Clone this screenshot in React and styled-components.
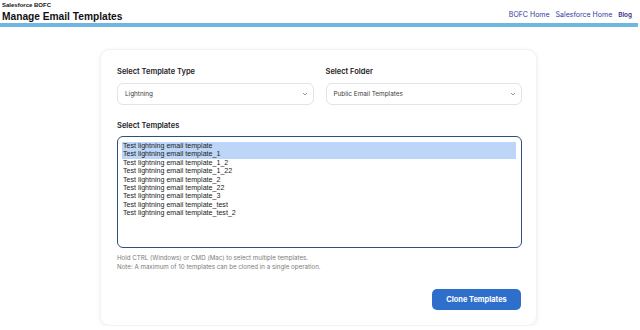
import React from "react";
import styled, { createGlobalStyle } from "styled-components";

const Global = createGlobalStyle`
  html, body { margin: 0; padding: 0; background: #ffffff; }
  body { font-family: "Inter", "Liberation Sans", sans-serif; color: #1f1f1f; }
  * { box-sizing: border-box; }
`;

const Header = styled.header`
  display: flex;
  justify-content: space-between;
  align-items: flex-end;
  padding: 1px 8px 0 2px;
  height: 23px;
`;

const Brand = styled.div`
  display: flex;
  flex-direction: column;
  font-family: "Liberation Sans", Arial, sans-serif;
`;

const SiteName = styled.div`
  font-size: 6px;
  font-weight: 700;
  line-height: 7px;
  color: #111;
`;

const Title = styled.h1`
  margin: 1px 0 0;
  font-size: 10.2px;
  font-weight: 700;
  line-height: 13px;
  color: #111;
`;

const Nav = styled.nav`
  display: flex;
  gap: 6px;
  align-items: baseline;
  padding-bottom: 4px;
`;

const NavLink = styled.a`
  font-family: "Inter", sans-serif;
  font-size: ${(p) => (p.$small ? "6.4px" : "7px")};
  font-weight: ${(p) => (p.$small ? 600 : 400)};
  color: ${(p) => (p.$small ? "#3d2f8a" : "#2f3ba0")};
  text-decoration: none;
`;

const Bar = styled.div`
  height: 4px;
  margin-right: 2px;
  background: #6fb7e1;
`;

const Main = styled.main`
  display: flex;
  justify-content: center;
  padding: 22px 3px 0 0;
`;

const Card = styled.section`
  width: 437px;
  background: #fff;
  border-radius: 10px;
  border: 1px solid #f1f2f4;
  box-shadow: 0 1px 5px rgba(0, 0, 0, 0.07);
  padding: 17px 14px 15px 16px;
  display: flex;
  flex-direction: column;
`;

const Row = styled.div`
  display: grid;
  grid-template-columns: 1fr 1fr;
  gap: 12px;
`;

const Field = styled.div`
  display: flex;
  flex-direction: column;
`;

const Label = styled.label`
  font-size: 7.5px;
  font-weight: 600;
  line-height: 9px;
  color: #1c1c1c;
  margin-bottom: 6.5px;
  margin-top: ${(p) => p.$top || "0"};
`;

const SelectBox = styled.div`
  height: 22px;
  border: 1px solid #e2e4e8;
  border-radius: 6px;
  display: flex;
  align-items: center;
  justify-content: space-between;
  padding: 0 5px 0 7px;
  font-size: 6.4px;
  color: #3c3c3c;
  background: #fff;
`;

const Chevron = () => (
  <svg width="6" height="4" viewBox="0 0 6 4">
    <path d="M1 1 L3 3 L5 1" fill="none" stroke="#7a7a7a" strokeWidth="0.8" />
  </svg>
);

const ListBox = styled.ul`
  list-style: none;
  margin: 0;
  height: 112px;
  border: 1px solid #2f4f80;
  border-radius: 6px;
  padding: 5px 5px 0 4px;
  font-family: "Liberation Sans", Arial, sans-serif;
  font-size: 7.1px;
  color: #222;
`;

const Option = styled.li`
  height: 8.4px;
  line-height: 8.4px;
  padding-left: 1px;
  background: ${(p) => (p.$selected ? "#bdd5f6" : "transparent")};
`;

const Help = styled.p`
  margin: 5px 0 0;
  font-size: 6.2px;
  line-height: 9.4px;
  color: #7a7a7a;
`;

const Actions = styled.div`
  display: flex;
  justify-content: flex-end;
  margin-top: 17px;
  padding-right: 1px;
`;

const Button = styled.button`
  width: 89px;
  height: 21px;
  border: none;
  border-radius: 5px;
  background: #2f6fcc;
  color: #fff;
  font-family: "Inter", sans-serif;
  font-size: 7.4px;
  font-weight: 700;
  cursor: pointer;
`;

const templates = [
  "Test lightning email template",
  "Test lightning email template_1",
  "Test lightning email template_1_2",
  "Test lightning email template_1_22",
  "Test lightning email template_2",
  "Test lightning email template_22",
  "Test lightning email template_3",
  "Test lightning email template_test",
  "Test lightning email template_test_2",
];

export default function App() {
  return (
    <>
      <Global />
      <Header>
        <Brand>
          <SiteName>Salesforce BOFC</SiteName>
          <Title>Manage Email Templates</Title>
        </Brand>
        <Nav>
          <NavLink href="#">BOFC Home</NavLink>
          <NavLink href="#">Salesforce Home</NavLink>
          <NavLink href="#" $small>Blog</NavLink>
        </Nav>
      </Header>
      <Bar />
      <Main>
        <Card>
          <Row>
            <Field>
              <Label>Select Template Type</Label>
              <SelectBox>
                <span>Lightning</span>
                <Chevron />
              </SelectBox>
            </Field>
            <Field>
              <Label>Select Folder</Label>
              <SelectBox>
                <span>Public Email Templates</span>
                <Chevron />
              </SelectBox>
            </Field>
          </Row>
          <Field>
            <Label $top="16px">Select Templates</Label>
            <ListBox>
              {templates.map((t, i) => (
                <Option key={t} $selected={i < 2}>
                  {t}
                </Option>
              ))}
            </ListBox>
          </Field>
          <Help>
            Hold CTRL (Windows) or CMD (Mac) to select multiple templates.
            <br />
            Note: A maximum of 10 templates can be cloned in a single operation.
          </Help>
          <Actions>
            <Button>Clone Templates</Button>
          </Actions>
        </Card>
      </Main>
    </>
  );
}
